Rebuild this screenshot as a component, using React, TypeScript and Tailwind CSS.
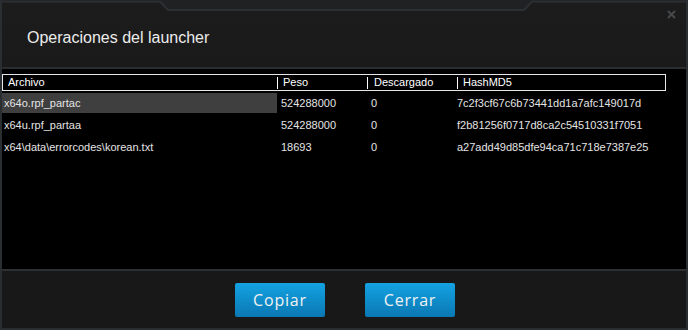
import React from "react";

const rows = [
  { file: "x64o.rpf_partac", size: "524288000", dl: "0", hash: "7c2f3cf67c6b73441dd1a7afc149017d", sel: true },
  { file: "x64u.rpf_partaa", size: "524288000", dl: "0", hash: "f2b81256f0717d8ca2c54510331f7051", sel: false },
  { file: "x64\\data\\errorcodes\\korean.txt", size: "18693", dl: "0", hash: "a27add49d85dfe94ca71c718e7387e25", sel: false },
];

export default function App() {
  return (
    <div className="relative w-[688px] h-[330px] overflow-hidden bg-[#1a1a1a] border-x-2 border-b-2 border-[#2b2e31] flex flex-col" style={{ fontFamily: '"Liberation Sans", Arial, sans-serif' }}>
      <svg className="absolute left-0 top-0" width="688" height="12" viewBox="0 0 688 12">
        <polygon points="166,0 522,0 530,0 522,10 166,10 158,0" fill="#202122" />
        <polyline points="0,1.5 158,1.5 166,10 522,10 530,1.5 688,1.5" fill="none" stroke="#2c2f33" strokeWidth="2" />
      </svg>
      <svg className="absolute left-[665px] top-[10px]" width="9" height="9" viewBox="0 0 9 9">
        <path d="M1 1L8 8M8 1L1 8" stroke="#46494c" strokeWidth="2" />
      </svg>
      <div className="h-[67px] shrink-0 pl-[25px] pt-[29px] bg-gradient-to-b from-[#1c1c1c] to-[#1a1a1a]">
        <div className="text-[16px] leading-[18px] text-[#ececec]">Operaciones del launcher</div>
      </div>
      <div className="h-[2px] shrink-0 bg-[#2b2e31]" />
      <div className="h-[200px] shrink-0 bg-black pt-[5px]">
        <div className="w-[664px] h-[17px] border border-[#e8e8e8] grid grid-cols-[274px_90px_90px_1fr] text-[11px] leading-[15px] text-white">
          <div className="pl-[5px]">Archivo</div>
          <div className="flex items-center"><div className="w-px h-[12px] bg-white mr-[5px]" />Peso</div>
          <div className="flex items-center"><div className="w-px h-[12px] bg-white mr-[6px]" />Descargado</div>
          <div className="flex items-center"><div className="w-px h-[12px] bg-white mr-[5px]" />HashMD5</div>
        </div>
        <div className="flex flex-col pt-[1px]">
          {rows.map((r) => (
            <div key={r.file} className="grid grid-cols-[275px_90px_90px_1fr] h-[22px] items-center text-[11px] text-[#e4e4e4]">
              <div className={`h-[20px] flex items-center pl-[2px] ${r.sel ? "bg-[#3f3f3f]" : ""}`}>{r.file}</div>
              <div className="pl-[4px]">{r.size}</div>
              <div className="pl-[4px]">{r.dl}</div>
              <div className="pl-[0px]">{r.hash}</div>
            </div>
          ))}
        </div>
      </div>
      <div className="h-[2px] shrink-0 bg-[#2c3033]" />
      <div className="flex-1 bg-[#181818] flex items-center justify-center gap-[40px] pl-[2px]">
        {["Copiar", "Cerrar"].map((t) => (
          <button key={t} className="w-[90px] h-[34px] rounded-[2px] bg-gradient-to-b from-[#14a2e2] to-[#0a78b3] text-[16px] tracking-[0.8px] text-[#f2f2f2]" style={{ fontFamily: '"Open Sans", sans-serif' }}>
            {t}
          </button>
        ))}
      </div>
    </div>
  );
}
